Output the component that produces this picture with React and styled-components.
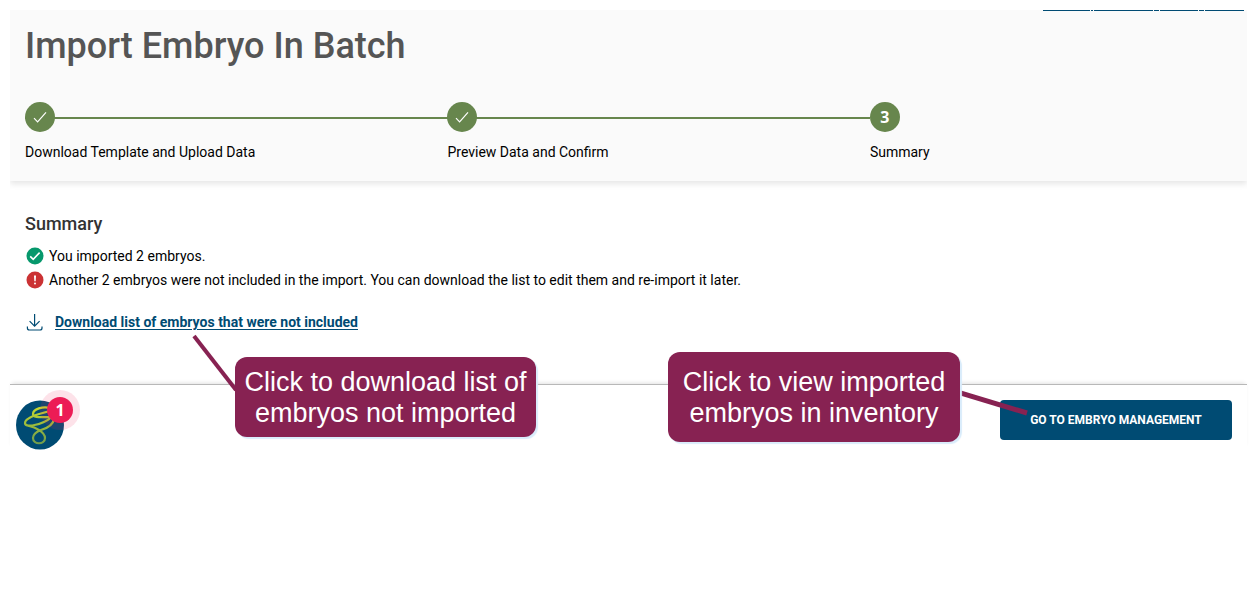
import React from "react";
import styled, { createGlobalStyle } from "styled-components";

const steps = [
  { label: "Download Template and Upload Data", done: true },
  { label: "Preview Data and Confirm", done: true },
  { label: "Summary", done: false },
];

const underlineParts = [47, 2, 59, 5, 38, 5, 39];

const StepCheck = () => (
  <svg width="14" height="12" viewBox="0 0 14 12" fill="none" stroke="#fff" strokeWidth="1.2">
    <path d="M1 7.2 4.6 10.8 13 1.4" />
  </svg>
);

const SuccessIcon = () => (
  <svg width="18" height="18" viewBox="0 0 18 18">
    <circle cx="9" cy="9" r="8.5" fill="#06986c" />
    <path d="M4.2 9.4 7.2 12.3 13.6 5.6" fill="none" stroke="#fff" strokeWidth="1.6" />
  </svg>
);

const ErrorIcon = () => (
  <svg width="18" height="18" viewBox="0 0 18 18">
    <circle cx="9" cy="9" r="8.5" fill="#cb3234" />
    <path d="M8 4.5h2l-.3 5.7H8.3z" fill="#fff" />
    <circle cx="9" cy="12.4" r="1" fill="#fff" />
  </svg>
);

const DownloadIcon = () => (
  <svg width="18" height="18" viewBox="0 0 18 18" fill="none" stroke="#004b73" strokeWidth="1.2">
    <path d="M8.6 1v12M3.6 8.2l5 5 5-5M1.4 13.4v1.6q0 2 2 2h10.6q2 0 2-2v-1.6" />
  </svg>
);

const HelperLogo = () => (
  <svg width="48" height="50" viewBox="0 0 48 50">
    <defs>
      <linearGradient id="helper-green" x1="0" y1="7" x2="0" y2="44" gradientUnits="userSpaceOnUse">
        <stop offset="0" stopColor="#c6d92f" />
        <stop offset="1" stopColor="#6f9b4c" />
      </linearGradient>
    </defs>
    <ellipse cx="24" cy="25" rx="24" ry="24.5" fill="#004b73" />
    <g fill="none" stroke="url(#helper-green)" strokeWidth="2.2" strokeLinecap="round">
      <path d="M34 8C27 6 17 9 17 14c0 4 8 3 16 3" />
      <path d="M34 11C26 13 9 17 9 23c0 5 13 2 19-1 5-2 9-6 9-8" />
      <path d="M13 26c6 1 16 6 16 12 0 7-12 7-12 0 0-4 3-6 8-8 7-2 12-5 13-11-2-2-6-2-10-2" />
    </g>
  </svg>
);

const App = () => {
  return (
    <Page>
      <GlobalStyle />
      <Header>
        <CutUnderline>
          {underlineParts.map((width, index) => (
            <UnderlinePart key={index} $width={width} />
          ))}
        </CutUnderline>
        <Title>Import Embryo In Batch</Title>
        <StepList>
          {steps.map((step, index) => (
            <Step key={step.label}>
              <StepTrack $last={index === steps.length - 1}>
                <StepCircle>{step.done ? <StepCheck /> : index + 1}</StepCircle>
              </StepTrack>
              <StepLabel>{step.label}</StepLabel>
            </Step>
          ))}
        </StepList>
      </Header>
      <Content>
        <SectionTitle>Summary</SectionTitle>
        <Message>
          <SuccessIcon />
          You imported 2 embryos.
        </Message>
        <Message>
          <ErrorIcon />
          Another 2 embryos were not included in the import. You can download the list to edit them
          and re-import it later.
        </Message>
        <DownloadRow>
          <DownloadIcon />
          <DownloadLink href="#download">Download list of embryos that were not included</DownloadLink>
        </DownloadRow>
      </Content>
      <Footer>
        <HelperButton aria-label="Help, 1 notification">
          <HelperLogo />
          <Badge>1</Badge>
        </HelperButton>
        <PrimaryButton>GO TO EMBRYO MANAGEMENT</PrimaryButton>
        <DownloadPointer width="46" height="62" viewBox="0 0 46 62">
          <path d="M2 2 44 56" stroke="#872252" strokeWidth="4" />
        </DownloadPointer>
        <DownloadCallout>
          Click to download list of
          <br />
          embryos not imported
        </DownloadCallout>
        <ManagementPointer width="72" height="28" viewBox="0 0 72 28">
          <path d="M0 3 70 24" stroke="#872252" strokeWidth="5" />
        </ManagementPointer>
        <ManagementCallout>
          Click to view imported
          <br />
          embryos in inventory
        </ManagementCallout>
      </Footer>
    </Page>
  );
};

const GlobalStyle = createGlobalStyle`
  * {
    box-sizing: border-box;
  }
  body {
    margin: 0;
    background: #fff;
    color: #000;
    font-family: Roboto, "Liberation Sans", sans-serif;
    font-size: 14px;
  }
`;

const Page = styled.main`
  padding: 10px 12px 0 10px;
`;

const Header = styled.header`
  padding: 0 15px 18px;
  background: #fafafa;
  box-shadow: 0 3px 6px rgba(0, 0, 0, 0.1);
  clip-path: inset(0 0 -9px 0);
`;

const CutUnderline = styled.div`
  display: flex;
  justify-content: flex-end;
  gap: 1px;
  height: 1px;
  margin-right: -12px;
`;

const UnderlinePart = styled.span`
  width: ${(props) => props.$width}px;
  background: #004b73;
`;

const Title = styled.h1`
  margin: 11px 0 32px;
  color: #555;
  font-size: 36px;
  font-weight: 500;
  line-height: 48px;
`;

const StepList = styled.ol`
  display: flex;
  margin: 0;
  padding: 0;
  list-style: none;
`;

const Step = styled.li`
  flex: 0 0 35%;
`;

const StepTrack = styled.div`
  background: ${(props) =>
    props.$last ? "none" : "linear-gradient(#67864d, #67864d) 0 15px / 100% 2px no-repeat"};
`;

const StepCircle = styled.span`
  display: flex;
  align-items: center;
  justify-content: center;
  width: 30px;
  height: 30px;
  border-radius: 50%;
  background: #67864d;
  color: #fff;
  font-family: "Noto Sans", sans-serif;
  font-size: 16px;
  font-weight: 700;
`;

const StepLabel = styled.div`
  margin-top: 10px;
  padding-bottom: 1px;
  line-height: 20px;
`;

const Content = styled.section`
  padding: 32px 15px 0;
`;

const SectionTitle = styled.h2`
  margin: 0 0 10px;
  color: #333;
  font-size: 18px;
  font-weight: 500;
  line-height: 21px;
`;

const Message = styled.p`
  display: flex;
  align-items: center;
  gap: 5px;
  margin: 0;
  padding-left: 1px;
  line-height: 24px;
`;

const DownloadRow = styled.div`
  display: flex;
  align-items: center;
  gap: 11px;
  margin: 18px 0 50px;
  padding-left: 1px;
  line-height: 24px;
`;

const DownloadLink = styled.a`
  color: #004b73;
  font-weight: 700;
  text-underline-offset: 2px;
`;

const Footer = styled.footer`
  display: flex;
  position: relative;
  align-items: flex-start;
  justify-content: space-between;
  padding: 15px 15px 0 6px;
  border-top: 1px solid #b8b8b8;
  box-shadow: 0 -3px 4px -2px rgba(0, 0, 0, 0.12);
`;

const HelperButton = styled.button`
  position: relative;
  height: 50px;
  padding: 0;
  border: 0;
  background: none;
`;

const Badge = styled.span`
  position: absolute;
  top: -3px;
  left: 31px;
  width: 26px;
  height: 26px;
  border-radius: 50%;
  background: #ec1c55;
  box-shadow: 0 0 0 7px rgba(236, 28, 85, 0.13);
  color: #fff;
  font-family: "Noto Sans", sans-serif;
  font-size: 16px;
  font-weight: 700;
  line-height: 26px;
  text-align: center;
`;

const PrimaryButton = styled.button`
  width: 232px;
  height: 40px;
  border: 0;
  border-radius: 4px;
  background: #004b73;
  color: #fff;
  font-family: inherit;
  font-size: 12px;
  font-weight: 700;
`;

const Callout = styled.div`
  display: flex;
  position: absolute;
  align-items: center;
  justify-content: center;
  padding-top: 2px;
  border-radius: 12px;
  background: #872252;
  box-shadow: 2px 2px 1px #d9ecfb;
  color: #fff;
  font-family: "Liberation Sans", Arial, sans-serif;
  font-size: 27px;
  line-height: 31px;
  text-align: center;
  white-space: nowrap;
`;

const DownloadCallout = styled(Callout)`
  top: -28px;
  left: 225px;
  width: 301px;
  height: 80px;
`;

const ManagementCallout = styled(Callout)`
  top: -33px;
  right: 287px;
  width: 292px;
  height: 90px;
`;

const DownloadPointer = styled.svg`
  position: absolute;
  top: -51px;
  left: 182px;
`;

const ManagementPointer = styled.svg`
  position: absolute;
  top: 4px;
  right: 218px;
`;

export default App;
